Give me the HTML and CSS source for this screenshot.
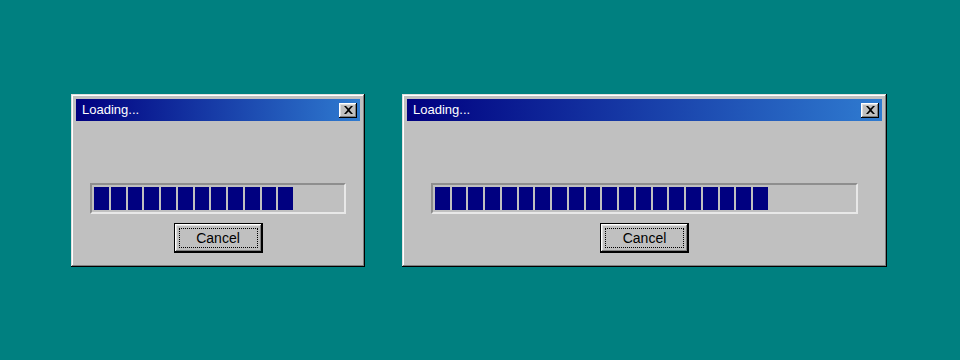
FILE: index.html
```html
<!DOCTYPE html>
<html>
<head>
<meta charset="utf-8">
<link rel="stylesheet" href="styles.css">
</head>
<body>
<div class="desk">
  <div class="win win-sm">
    <div class="title">
      <span class="title-text">Loading...</span>
      <button class="close" aria-label="Close">
        <svg width="9" height="8" viewBox="0 0 9 8"><path d="M0 0h2l2.5 2.5L7 0h2L5.5 4 9 8H7L4.5 5.5 2 8H0l3.5-4z" fill="#000"/></svg>
      </button>
    </div>
    <div class="body">
      <div class="bar">
        <span class="seg"></span><span class="seg"></span><span class="seg"></span><span class="seg"></span>
        <span class="seg"></span><span class="seg"></span><span class="seg"></span><span class="seg"></span>
        <span class="seg"></span><span class="seg"></span><span class="seg"></span><span class="seg"></span>
      </div>
      <button class="btn"><span class="focus">Cancel</span></button>
    </div>
  </div>
  <div class="win win-lg">
    <div class="title">
      <span class="title-text">Loading...</span>
      <button class="close" aria-label="Close">
        <svg width="9" height="8" viewBox="0 0 9 8"><path d="M0 0h2l2.5 2.5L7 0h2L5.5 4 9 8H7L4.5 5.5 2 8H0l3.5-4z" fill="#000"/></svg>
      </button>
    </div>
    <div class="body">
      <div class="bar">
        <span class="seg"></span><span class="seg"></span><span class="seg"></span><span class="seg"></span>
        <span class="seg"></span><span class="seg"></span><span class="seg"></span><span class="seg"></span>
        <span class="seg"></span><span class="seg"></span><span class="seg"></span><span class="seg"></span>
        <span class="seg"></span><span class="seg"></span><span class="seg"></span><span class="seg"></span>
        <span class="seg"></span><span class="seg"></span><span class="seg"></span><span class="seg"></span>
      </div>
      <button class="btn"><span class="focus">Cancel</span></button>
    </div>
  </div>
</div>
</body>
</html>
```
FILE: styles.css
```css
html, body {
  margin: 0;
  padding: 0;
  background: #008080;
}
.desk {
  height: 360px;
  display: flex;
  align-items: center;
  justify-content: center;
  gap: 37px;
  padding-right: 2px;
  font-family: "Liberation Sans", Arial, sans-serif;
}
.win {
  box-sizing: border-box;
  height: 173px;
  padding: 5px;
  background: #c0c0c0;
  display: flex;
  flex-direction: column;
  box-shadow: inset -1px -1px 0 #000, inset 1px 1px 0 #dfdfdf,
              inset -2px -2px 0 #808080, inset 2px 2px 0 #fff;
}
.win-sm { width: 294px; }
.win-lg { width: 485px; }
.title {
  height: 22px;
  display: flex;
  align-items: center;
  justify-content: space-between;
  padding: 0 3px 0 6px;
  background: linear-gradient(to right, #000080, #2f7bd0);
}
.title-text {
  color: #fff;
  font-size: 13px;
  line-height: 22px;
}
.close {
  box-sizing: border-box;
  width: 18px;
  height: 15px;
  margin-top: 1px;
  padding: 0;
  border: none;
  background: #c0c0c0;
  display: flex;
  align-items: center;
  justify-content: center;
  box-shadow: inset -1px -1px 0 #000, inset 1px 1px 0 #fff,
              inset -2px -2px 0 #808080, inset 2px 2px 0 #dfdfdf;
}
.body {
  flex: 1;
  display: flex;
  flex-direction: column;
  align-items: center;
  padding-top: 62px;
}
.bar {
  box-sizing: border-box;
  width: 90%;
  height: 31px;
  padding: 2px 2px;
  display: flex;
  gap: 2px;
  border-style: solid;
  border-width: 2px;
  border-color: #8e8e8e #e8e8e8 #e8e8e8 #8e8e8e;
}
.seg {
  width: 14.75px;
  height: 100%;
  background: #000080;
}
.btn {
  box-sizing: border-box;
  margin-top: 9px;
  width: 89px;
  height: 30px;
  padding: 4px;
  border: 1px solid #000;
  background: #c0c0c0;
  font-family: "Liberation Sans", Arial, sans-serif;
  font-size: 14px;
  color: #000;
  display: flex;
  box-shadow: inset -1px -1px 0 #000, inset 1px 1px 0 #fff,
              inset -2px -2px 0 #808080, inset 2px 2px 0 #dfdfdf;
}
.focus {
  flex: 1;
  display: flex;
  align-items: center;
  justify-content: center;
  border: 1px dotted #000;
}
```
